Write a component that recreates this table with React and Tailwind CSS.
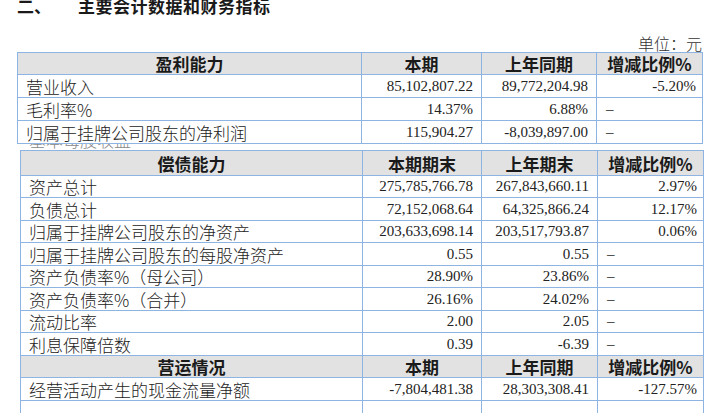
import React from "react";

const t1 = [
  ["营业收入", "85,102,807.22", "89,772,204.98", "-5.20%", "h-[23px]"],
  ["毛利率%", "14.37%", "6.88%", "–", "h-[23px]"],
  ["归属于挂牌公司股东的净利润", "115,904.27", "-8,039,897.00", "–", "h-[23px]"],
];

const t2 = [
  ["资产总计", "275,785,766.78", "267,843,660.11", "2.97%", "h-[22px]"],
  ["负债总计", "72,152,068.64", "64,325,866.24", "12.17%", "h-[23px]"],
  ["归属于挂牌公司股东的净资产", "203,633,698.14", "203,517,793.87", "0.06%", "h-[22px]"],
  ["归属于挂牌公司股东的每股净资产", "0.55", "0.55", "–", "h-[23px]"],
  ["资产负债率%（母公司）", "28.90%", "23.86%", "–", "h-[22px]"],
  ["资产负债率%（合并）", "26.16%", "24.02%", "–", "h-[23px]"],
  ["流动比率", "2.00", "2.05", "–", "h-[22px]"],
  ["利息保障倍数", "0.39", "-6.39", "–", "h-[23px]"],
];

const cell = "border-r border-b border-[#8db4e2] flex items-center leading-none";
const num = "font-['Liberation_Serif','Noto_Sans_CJK_SC',serif] text-[15px] text-[#222]";

function Header({ cols, labels, h }) {
  return (
    <div className={`grid ${cols} bg-[#e2e2e2]`}>
      {labels.map((l, i) => (
        <div
          key={i}
          className={`${cell} ${h} justify-center font-bold text-[17px] text-[#1a1a1a] font-['Noto_Sans_CJK_SC','Liberation_Serif',sans-serif]`}
        >
          {l}
        </div>
      ))}
    </div>
  );
}

function Row({ cols, r }) {
  const h = r[4];
  return (
    <div className={`grid ${cols} bg-white`}>
      <div className={`${cell} ${h} pl-[8px] text-[17px] font-light text-[#222] font-['Noto_Sans_CJK_SC',serif]`}>
        {r[0]}
      </div>
      <div className={`${cell} ${h} justify-end pr-[8px] ${num}`}>{r[1]}</div>
      <div className={`${cell} ${h} justify-end pr-[8px] ${num}`}>{r[2]}</div>
      {r[3] === "–" ? (
        <div className={`${cell} ${h} justify-start pl-[9px] ${num}`}>–</div>
      ) : (
        <div className={`${cell} ${h} justify-end pr-[6px] ${num}`}>{r[3]}</div>
      )}
    </div>
  );
}

export default function App() {
  const c1 = "grid-cols-[344px_120px_115px_106px]";
  const c2 = "grid-cols-[342px_119px_116px_106px]";
  return (
    <div className="w-[706px] h-[413px] overflow-hidden bg-white">
      <div className="h-[20px] mt-[-4px] flex items-center text-[17px] font-bold text-[#1a1a1a] font-['Noto_Sans_CJK_SC',sans-serif]">
        <span className="ml-[17px] w-[61px]">二、</span>
        <span className="tracking-[0.5px]">主要会计数据和财务指标</span>
      </div>
      <div className="mt-[17px] h-[19px] flex items-center justify-end pr-[4px] text-[16px] leading-none font-light text-[#333] font-['Noto_Sans_CJK_SC',serif]">
        单位：元
      </div>

      <div className="ml-[17px] w-[686px] border-l border-t border-[#8db4e2]">
        <Header cols={c1} labels={["盈利能力", "本期", "上年同期", "增减比例%"]} h="h-[22px]" />
        {t1.map((r, i) => (
          <Row key={i} cols={c1} r={r} />
        ))}
      </div>

      <div className="h-[6px] overflow-hidden ml-[29px]">
        <div className="mt-[-13px] text-[17px] leading-none text-[#888] font-light font-['Noto_Sans_CJK_SC',serif]">
          基本每股收益
        </div>
      </div>

      <div className="ml-[20px] w-[684px] border-l border-t border-[#8db4e2]">
        <Header cols={c2} labels={["偿债能力", "本期期末", "上年期末", "增减比例%"]} h="h-[25px]" />
        {t2.map((r, i) => (
          <Row key={i} cols={c2} r={r} />
        ))}
        <Header cols={c2} labels={["营运情况", "本期", "上年同期", "增减比例%"]} h="h-[22px]" />
        <Row cols={c2} r={["经营活动产生的现金流量净额", "-7,804,481.38", "28,303,308.41", "-127.57%", "h-[23px]"]} />
        <Row cols={c2} r={["", "", "", "", "h-[22px]"]} />
      </div>
    </div>
  );
}
